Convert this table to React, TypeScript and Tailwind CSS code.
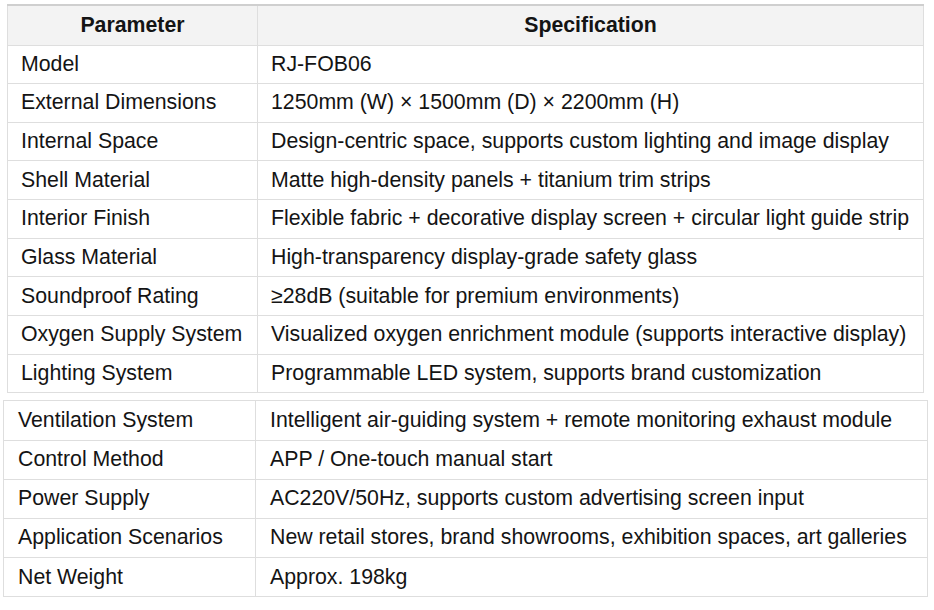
import React from 'react';

type Row = [string, string];

const firstRows: Row[] = [
  ['Model', 'RJ-FOB06'],
  ['External Dimensions', '1250mm (W) × 1500mm (D) × 2200mm (H)'],
  ['Internal Space', 'Design-centric space, supports custom lighting and image display'],
  ['Shell Material', 'Matte high-density panels + titanium trim strips'],
  ['Interior Finish', 'Flexible fabric + decorative display screen + circular light guide strip'],
  ['Glass Material', 'High-transparency display-grade safety glass'],
  ['Soundproof Rating', '≥28dB (suitable for premium environments)'],
  ['Oxygen Supply System', 'Visualized oxygen enrichment module (supports interactive display)'],
  ['Lighting System', 'Programmable LED system, supports brand customization'],
];

const secondRows: Row[] = [
  ['Ventilation System', 'Intelligent air-guiding system + remote monitoring exhaust module'],
  ['Control Method', 'APP / One-touch manual start'],
  ['Power Supply', 'AC220V/50Hz, supports custom advertising screen input'],
  ['Application Scenarios', 'New retail stores, brand showrooms, exhibition spaces, art galleries'],
  ['Net Weight', 'Approx. 198kg'],
];

const App: React.FC = () => {
  return (
    <div
      className="w-[934px] h-[610px] bg-white text-[#141414] text-[21.3px] leading-none overflow-hidden"
      style={{ fontFamily: '"Liberation Sans", Arial, sans-serif' }}
    >
      <div className="pt-[4px] pl-[7px]">
        <table className="w-[917px] border-collapse table-fixed border-t-2 border-t-[#cfcfcf]">
          <colgroup>
            <col className="w-[250px]" />
            <col />
          </colgroup>
          <thead>
            <tr className="h-[40px] bg-[#f3f3f3]">
              <th className="border border-[#dedede] border-t-0 font-bold text-center">Parameter</th>
              <th className="border border-[#dedede] border-t-0 font-bold text-center">Specification</th>
            </tr>
          </thead>
          <tbody>
            {firstRows.map(([k, v]) => (
              <tr key={k} className="h-[38.67px]">
                <td className="border border-[#dedede] px-[13px] whitespace-nowrap">{k}</td>
                <td className="border border-[#dedede] px-[13px] whitespace-nowrap">{v}</td>
              </tr>
            ))}
          </tbody>
        </table>
      </div>

      <div className="pt-[7px] pl-[3px]">
        <table className="w-[925px] border-collapse table-fixed">
          <colgroup>
            <col className="w-[252px]" />
            <col />
          </colgroup>
          <tbody>
            {secondRows.map(([k, v]) => (
              <tr key={k} className="h-[39.2px]">
                <td className="border border-[#dedede] px-[14px] whitespace-nowrap">{k}</td>
                <td className="border border-[#dedede] px-[14px] whitespace-nowrap">{v}</td>
              </tr>
            ))}
          </tbody>
        </table>
      </div>
    </div>
  );
};

export default App;
